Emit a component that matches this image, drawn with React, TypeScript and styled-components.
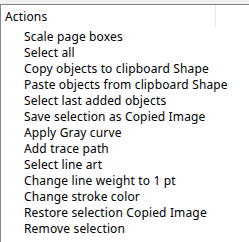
import React from "react";
import styled, { createGlobalStyle } from "styled-components";

const Global = createGlobalStyle`
  html, body { margin: 0; padding: 0; background: #f0f0f0; }
  body { font-family: "Segoe UI", "Noto Sans", "Open Sans", sans-serif; }
`;

const Page = styled.div`
  width: 249px;
  height: 242px;
  padding-top: 4px;
  box-sizing: border-box;
  background: #f0f0f0;
  overflow: hidden;
`;

const Panel = styled.div`
  height: 238px;
  background: #ffffff;
  border-top: 1px solid #828790;
  border-left: 1px solid #828790;
  box-sizing: border-box;
  display: flex;
  flex-direction: column;
`;

const Header = styled.div`
  display: flex;
  height: 22px;
  flex-shrink: 0;
`;

const HeaderCell = styled.div<{ $w: number }>`
  width: ${(p) => p.$w}px;
  box-sizing: border-box;
  padding-left: 4px;
  padding-top: 1px;
  border-right: 1px solid #e5e5e5;
  font-size: 12px;
  letter-spacing: 0.15px;
  line-height: 21px;
  color: #000;
`;

const List = styled.div`
  display: flex;
  flex-direction: column;
  padding-top: 2px;
`;

const Row = styled.div`
  height: 16px;
  line-height: 16px;
  padding-left: 23px;
  font-size: 12px;
  letter-spacing: 0.15px;
  color: #000;
  white-space: nowrap;
`;

const items = [
  "Scale page boxes",
  "Select all",
  "Copy objects to clipboard Shape",
  "Paste objects from clipboard Shape",
  "Select last added objects",
  "Save selection as Copied Image",
  "Apply Gray curve",
  "Add trace path",
  "Select line art",
  "Change line weight to 1 pt",
  "Change stroke color",
  "Restore selection Copied Image",
  "Remove selection",
];

export default function App() {
  return (
    <>
      <Global />
      <Page>
        <Panel>
          <Header>
            <HeaderCell $w={215}>Actions</HeaderCell>
          </Header>
          <List>
            {items.map((t) => (
              <Row key={t}>{t}</Row>
            ))}
          </List>
        </Panel>
      </Page>
    </>
  );
}
